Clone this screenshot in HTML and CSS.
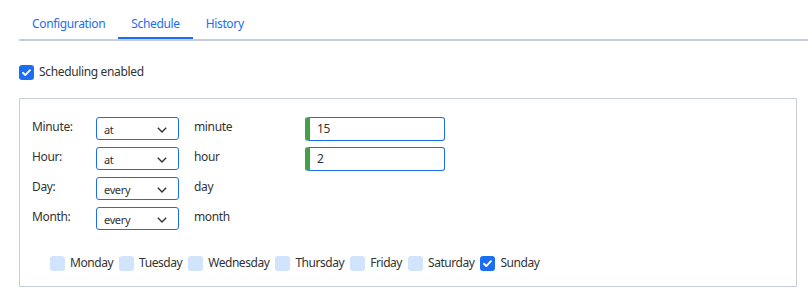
FILE: index.html
```html
<!DOCTYPE html>
<html lang="en">
<head>
  <meta charset="UTF-8" />
  <title>Job schedule</title>
  <link rel="stylesheet" href="styles.css">
</head>
<body>
  <!-- Tabs -->
  <nav class="tabs">
    <a class="tab">Configuration</a>
    <a class="tab active">Schedule</a>
    <a class="tab">History</a>
  </nav>

  <label class="check enable">
    <span class="box on"><svg viewBox="0 0 16 16"><path d="M4.2 8.3l2.5 2.4 5-5.2" /></svg></span>
    Scheduling enabled
  </label>

  <div class="panel">
    <div class="grid">
      <span class="lbl">Minute:</span>
      <div class="select"><span>at</span><svg viewBox="0 0 10 6"><path d="M0.8 0.8L5 5l4.2-4.2" /></svg></div>
      <span class="unit">minute</span>
      <div class="input">15</div>

      <span class="lbl">Hour:</span>
      <div class="select"><span>at</span><svg viewBox="0 0 10 6"><path d="M0.8 0.8L5 5l4.2-4.2" /></svg></div>
      <span class="unit">hour</span>
      <div class="input">2</div>

      <span class="lbl">Day:</span>
      <div class="select"><span>every</span><svg viewBox="0 0 10 6"><path d="M0.8 0.8L5 5l4.2-4.2" /></svg></div>
      <span class="unit">day</span>
      <span></span>

      <span class="lbl">Month:</span>
      <div class="select"><span>every</span><svg viewBox="0 0 10 6"><path d="M0.8 0.8L5 5l4.2-4.2" /></svg></div>
      <span class="unit">month</span>
      <span></span>
    </div>

    <div class="days">
      <label class="check"><span class="box"></span>Monday</label>
      <label class="check"><span class="box"></span>Tuesday</label>
      <label class="check"><span class="box"></span>Wednesday</label>
      <label class="check"><span class="box"></span>Thursday</label>
      <label class="check"><span class="box"></span>Friday</label>
      <label class="check"><span class="box"></span>Saturday</label>
      <label class="check"><span class="box on"><svg viewBox="0 0 16 16"><path d="M4.2 8.3l2.5 2.4 5-5.2" /></svg></span>Sunday</label>
    </div>
  </div>
</body>
</html>
```

FILE: styles.css
```css
body {
  margin: 0;
  background: #fff;
  color: #333;
  font-family: "Noto Sans", "Open Sans", sans-serif;
  font-size: 12px;
  letter-spacing: -0.35px;
}

.tabs {
  display: flex;
  margin-left: 19px;
  border-bottom: 2px solid #c8cddc;
}

.tab {
  padding: 16px 13px 5px;
  line-height: 16px;
  color: #1b6ef3;
  border-bottom: 2px solid transparent;
  cursor: pointer;
}

.tab.active {
  border-bottom-color: #1b6ef3;
}

.check {
  display: flex;
  align-items: center;
  gap: 5px;
  line-height: 16px;
}

.enable {
  margin: 23px 0 18px 19px;
}

.box {
  width: 15px;
  height: 15px;
  border-radius: 3px;
  background: #d2e3fc;
  display: flex;
  align-items: center;
  justify-content: center;
}

.box.on {
  background: #1b6ef3;
}

.box svg {
  width: 15px;
  height: 15px;
  fill: none;
  stroke: #fff;
  stroke-width: 2;
  stroke-linecap: round;
  stroke-linejoin: round;
}

.panel {
  margin: 0 11px 0 19px;
  border: 1px solid #c8cddc;
  padding: 18px 12px 15px;
}

.grid {
  display: grid;
  grid-template-columns: 64px 83px 126px 140px;
  grid-auto-rows: 23px;
  row-gap: 7px;
  align-items: center;
}

.lbl {
  margin-top: -4px;
}

.unit {
  margin: -4px 0 0 15px;
}

.select {
  height: 23px;
  box-sizing: border-box;
  border: 1px solid #1b6ef3;
  border-radius: 3px;
  display: flex;
  align-items: center;
  justify-content: space-between;
  padding: 2px 11px 0 7px;
  font-size: 11px;
}

.select svg {
  width: 10px;
  height: 6px;
  fill: none;
  stroke: #333;
  stroke-width: 1.4;
}

.input {
  height: 24px;
  box-sizing: border-box;
  border: 1px solid #1b6ef3;
  border-left: 5px solid #43a047;
  border-radius: 3px;
  padding-left: 7px;
  display: flex;
  align-items: center;
}

.days {
  display: flex;
  gap: 6px;
  margin: 25px 0 0 18px;
  letter-spacing: -0.45px;
}
```
